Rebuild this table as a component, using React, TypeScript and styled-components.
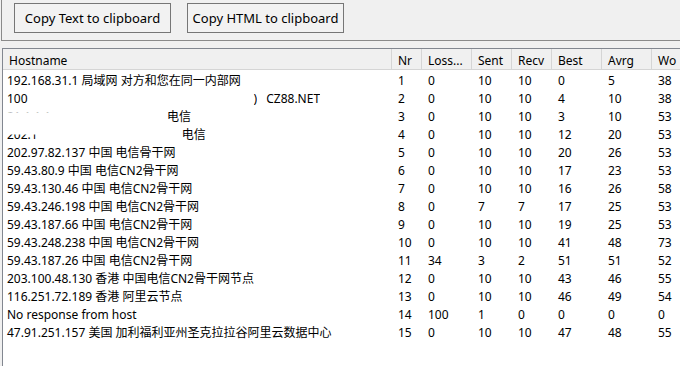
import React from 'react';
import styled, { createGlobalStyle } from 'styled-components';

const GlobalStyle = createGlobalStyle`
  html, body {
    margin: 0;
    padding: 0;
    background: #f0f0f0;
    overflow: hidden;
  }
  body {
    font-family: 'Noto Sans', 'Noto Sans CJK SC', sans-serif;
    font-size: 12px;
    color: #000;
  }
`;

const Window = styled.div`
  width: 680px;
  height: 366px;
  display: flex;
  flex-direction: column;
  overflow: hidden;
`;

const Toolbar = styled.div`
  display: flex;
  gap: 16px;
  height: 41px;
  box-sizing: border-box;
  margin-left: 1px;
  padding: 3px 0 0 12px;
  border-left: 1px solid #8a8a8a;
  border-bottom: 1px solid #8a8a8a;
`;

const Button = styled.button`
  width: 157px;
  height: 30px;
  box-sizing: border-box;
  padding: 0;
  border: 1px solid #767676;
  background: #f2f2f2;
  font-family: inherit;
  font-size: 13px;
  color: #000;
`;

const ListView = styled.div`
  flex: 1;
  margin: 7px 0 0 2px;
  background: #fff;
  border-left: 1px solid #828790;
  border-top: 1px solid #828790;
  overflow: hidden;
`;

const columns = '389px 30px 50px 40px 40px 50px 50px 60px';

const HeaderRow = styled.div`
  display: grid;
  grid-template-columns: ${columns};
  height: 21px;
  background: #f0f0f0;
  border-bottom: 1px solid #d5d5d5;
  box-sizing: border-box;
  margin-bottom: 1px;
`;

const HeaderCell = styled.div`
  padding: 2px 0 0 6px;
  line-height: 19px;
  border-right: 1px solid #d5d5d5;
  white-space: nowrap;
  overflow: hidden;
`;

const Row = styled.div`
  display: grid;
  grid-template-columns: ${columns};
  height: 18px;
  line-height: 19px;
`;

const Cell = styled.div<{ $first?: boolean }>`
  padding-left: ${(p) => (p.$first ? '4px' : '6px')};
  white-space: nowrap;
  overflow: hidden;
`;

const Clip = styled.span<{ $top?: number; $bottom?: number; $gap?: number }>`
  display: inline-block;
  margin-left: ${(p) => p.$gap ?? 0}px;
  clip-path: inset(${(p) => p.$top ?? 0}% 0 ${(p) => p.$bottom ?? 0}% 0);
`;

const headers = ['Hostname', 'Nr', 'Loss...', 'Sent', 'Recv', 'Best', 'Avrg', 'Wo'];

const rows: (string | number)[][] = [
  ['192.168.31.1 局域网 对方和您在同一内部网', 1, 0, 10, 10, 0, 5, 38],
  ['', 2, 0, 10, 10, 4, 10, 38],
  ['', 3, 0, 10, 10, 3, 10, 53],
  ['', 4, 0, 10, 10, 12, 20, 53],
  ['202.97.82.137 中国 电信骨干网', 5, 0, 10, 10, 20, 26, 53],
  ['59.43.80.9 中国 电信CN2骨干网', 6, 0, 10, 10, 17, 23, 53],
  ['59.43.130.46 中国 电信CN2骨干网', 7, 0, 10, 10, 16, 26, 58],
  ['59.43.246.198 中国 电信CN2骨干网', 8, 0, 7, 7, 17, 25, 53],
  ['59.43.187.66 中国 电信CN2骨干网', 9, 0, 10, 10, 19, 25, 53],
  ['59.43.248.238 中国 电信CN2骨干网', 10, 0, 10, 10, 41, 48, 73],
  ['59.43.187.26 中国 电信CN2骨干网', 11, 34, 3, 2, 51, 51, 52],
  ['203.100.48.130 香港 中国电信CN2骨干网节点', 12, 0, 10, 10, 43, 46, 55],
  ['116.251.72.189 香港 阿里云节点', 13, 0, 10, 10, 46, 49, 54],
  ['No response from host', 14, 100, 1, 0, 0, 0, 0],
  ['47.91.251.157 美国 加利福利亚州圣克拉拉谷阿里云数据中心', 15, 0, 10, 10, 47, 48, 55],
];

// rows 2-4 were partly blanked out in the capture
const redacted: Record<number, React.ReactNode> = {
  1: (
    <>
      100
      <Clip $gap={226}>)</Clip>
      <Clip $gap={9}>CZ88.NET</Clip>
    </>
  ),
  2: (
    <>
      <Clip $bottom={72}>21.1.1.1</Clip>
      <Clip $gap={116}>电信</Clip>
    </>
  ),
  3: (
    <>
      <Clip $top={50}>202.1</Clip>
      <Clip $gap={144}>电信</Clip>
    </>
  ),
};

const App = () => {
  return (
    <Window>
      <GlobalStyle />
      <Toolbar>
        <Button>Copy Text to clipboard</Button>
        <Button>Copy HTML to clipboard</Button>
      </Toolbar>
      <ListView>
        <HeaderRow>
          {headers.map((h) => (
            <HeaderCell key={h}>{h}</HeaderCell>
          ))}
        </HeaderRow>
        {rows.map((r, i) => (
          <Row key={i}>
            {r.map((v, j) => (
              <Cell key={j} $first={j === 0}>
                {j === 0 && redacted[i] ? redacted[i] : v}
              </Cell>
            ))}
          </Row>
        ))}
      </ListView>
    </Window>
  );
};

export default App;
